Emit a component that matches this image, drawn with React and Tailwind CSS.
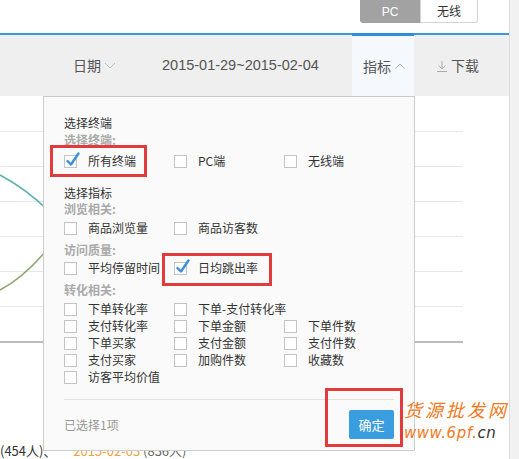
import React from 'react'

const CN = { fontFamily: '"Noto Sans CJK SC", "Liberation Sans", sans-serif' }

function Box({ checked }) {
  return (
    <span className="relative inline-block w-[13px] h-[13px] border border-[#c4c4c4] bg-white shrink-0">
      {checked && (
        <svg className="absolute left-[1px] top-[-4px]" width="14" height="15" viewBox="0 0 14 15">
          <path d="M1.5 9 L5 12.5 L12.5 1.5" fill="none" stroke="#3b8fd8" strokeWidth="2.4" strokeLinecap="round" strokeLinejoin="round" />
        </svg>
      )}
    </span>
  )
}

function Opt({ label, checked }) {
  return (
    <label className="flex items-center gap-[11px] text-[12px] text-[#333] whitespace-nowrap">
      <Box checked={checked} />
      <span>{label}</span>
    </label>
  )
}

function Row({ items, h = 'h-[17px]', mt }) {
  return (
    <div className={`grid grid-cols-[110px_110px_110px] items-center ${h} ${mt}`}>
      {items.map((it, i) => (it ? <Opt key={i} label={it.l} checked={it.c} /> : <span key={i} />))}
    </div>
  )
}

const Head = ({ children, mt, sub, h = 'h-[15px] leading-[15px]' }) => (
  <div className={`${h} text-[12px] ${sub ? 'font-bold text-[#aaa]' : 'text-[#333]'} ${mt}`}>{children}</div>
)

function Chevron({ up }) {
  return (
    <svg width="12" height="7" viewBox="0 0 12 7" className="ml-[3px]">
      <path d={up ? 'M1 6 L6 1 L11 6' : 'M1 1 L6 6 L11 1'} fill="none" stroke="#bbb" strokeWidth="1" />
    </svg>
  )
}

export default function App() {
  return (
    <div className="relative w-[519px] h-[459px] overflow-hidden bg-white flex" style={CN}>
      <div className="w-[509px] flex flex-col">
        {/* top switch */}
        <div className="h-[33px] flex justify-end pr-[31px]">
          <div className="flex h-[23px] text-[12px]">
            <div className="w-[60px] bg-[#a2a2a2] text-white flex items-center justify-center rounded-bl-[3px]" style={{ fontFamily: '"Liberation Sans", sans-serif' }}>PC</div>
            <div className="w-[58px] border border-t-0 border-[#d4d4d4] text-[#333] flex items-center justify-center rounded-br-[3px]">无线</div>
          </div>
        </div>
        <div className="h-[2px] bg-[#3a9ad9]" />
        {/* toolbar */}
        <div className="h-[61px] bg-[#efefef] flex items-center text-[14px] text-[#555]">
          <div className="ml-[73px] w-[89px] flex items-center">日期<Chevron /></div>
          <div className="w-[190px] text-[14.5px]" style={{ fontFamily: '"Liberation Sans", sans-serif' }}>2015-01-29~2015-02-04</div>
          <div className="w-[62px] h-[63px] -mt-[2px] border-t-[3px] border-[#2f8fd6] bg-[#f5f8fc] flex items-center pl-[11px]">
            指标<Chevron up />
          </div>
          <div className="ml-[22px] flex items-center">
            <svg width="12" height="12" viewBox="0 0 12 12" className="mr-[3px]">
              <path d="M6 1 V9 M2.5 5.5 L6 9 L9.5 5.5 M1 11.5 H11" fill="none" stroke="#aaa" strokeWidth="1" />
            </svg>
            下载
          </div>
        </div>
        {/* chart */}
        <div className="relative h-[247px] w-[463px]">
          <div className="h-[35px]" />
          {[0, 1, 2, 3, 4, 5].map(i => (
            <div key={i} className="h-[35px] border-t border-[#e8e8e8]" />
          ))}
          <div className="border-t-2 border-[#bdbdbd]" />
          <svg className="absolute left-0 top-0" width="60" height="247" viewBox="0 0 60 247">
            <path d="M0 79 Q25 92 50 116" fill="none" stroke="#5fb3b0" strokeWidth="1.6" />
            <path d="M0 194 Q25 181 50 150" fill="none" stroke="#8fa872" strokeWidth="1.6" />
          </svg>
        </div>
        <div className="mt-[100px] text-[13px] text-[#333] whitespace-nowrap leading-[16px]">
          (454人)、 <span className="text-[#f0a23c] ml-[14px]">2015-02-03</span> <span className="text-[#666]">(836人)</span>
        </div>
      </div>
      <div className="w-[10px] bg-[#f1f1f1] border-l border-[#dcdcdc]" />

      {/* popover */}
      <div className="absolute left-[43px] top-[96px] w-[372px] h-[355px] bg-[#fafafa] border border-[#cccccc] px-[20px] pt-[18px]">
        <Head>选择终端</Head>
        <Head sub mt="mt-[2px]">选择终端:</Head>
        <Row h="h-[20px]" mt="mt-[4px]" items={[{ l: '所有终端', c: true }, { l: 'PC端' }, { l: '无线端' }]} />
        <Head mt="mt-[13px]" h="h-[17px] leading-[17px]">选择指标</Head>
        <Head sub>浏览相关:</Head>
        <Row h="h-[20px]" mt="mt-[2px]" items={[{ l: '商品浏览量' }, { l: '商品访客数' }]} />
        <Head sub mt="mt-[4px]">访问质量:</Head>
        <Row h="h-[20px]" mt="mt-[1px]" items={[{ l: '平均停留时间' }, { l: '日均跳出率', c: true }]} />
        <Head sub mt="mt-[4px]">转化相关:</Head>
        <Row mt="mt-[3px]" items={[{ l: '下单转化率' }, { l: '下单-支付转化率' }]} />
        <Row items={[{ l: '支付转化率' }, { l: '下单金额' }, { l: '下单件数' }]} />
        <Row items={[{ l: '下单买家' }, { l: '支付金额' }, { l: '支付件数' }]} />
        <Row items={[{ l: '支付买家' }, { l: '加购件数' }, { l: '收藏数' }]} />
        <Row items={[{ l: '访客平均价值' }]} />
        <div className="mt-[14px] border-t border-[#e2e2e2]" />
        <div className="mt-[10px] flex items-center justify-between">
          <span className="text-[12px] text-[#999]">已选择1项</span>
          <button className="w-[45px] h-[29px] bg-[#3a9de0] text-white text-[13px] rounded-[2px]">确定</button>
        </div>
      </div>

      {/* annotation boxes */}
      <div className="absolute left-[50px] top-[145px] w-[97px] h-[32px] border-[3px] border-[#e23b3b]" />
      <div className="absolute left-[162px] top-[253px] w-[110px] h-[33px] border-[3px] border-[#e23b3b]" />
      <div className="absolute left-[325px] top-[388px] w-[78px] h-[59px] border-[3px] border-[#e23b3b]" />

      {/* watermark */}
      <div className="absolute left-[404px] top-[398px] italic">
        <div className="h-[24px] leading-[22px] text-[18px] text-[#f07a1c] tracking-[3px]">货源批发网</div>
        <div className="h-[22px] leading-[22px] text-[15px] text-[#f07a1c] tracking-[0.5px]" style={{ fontFamily: '"DejaVu Sans", sans-serif' }}>www.6pf.<span className="text-[#333]">cn</span></div>
      </div>
    </div>
  )
}
